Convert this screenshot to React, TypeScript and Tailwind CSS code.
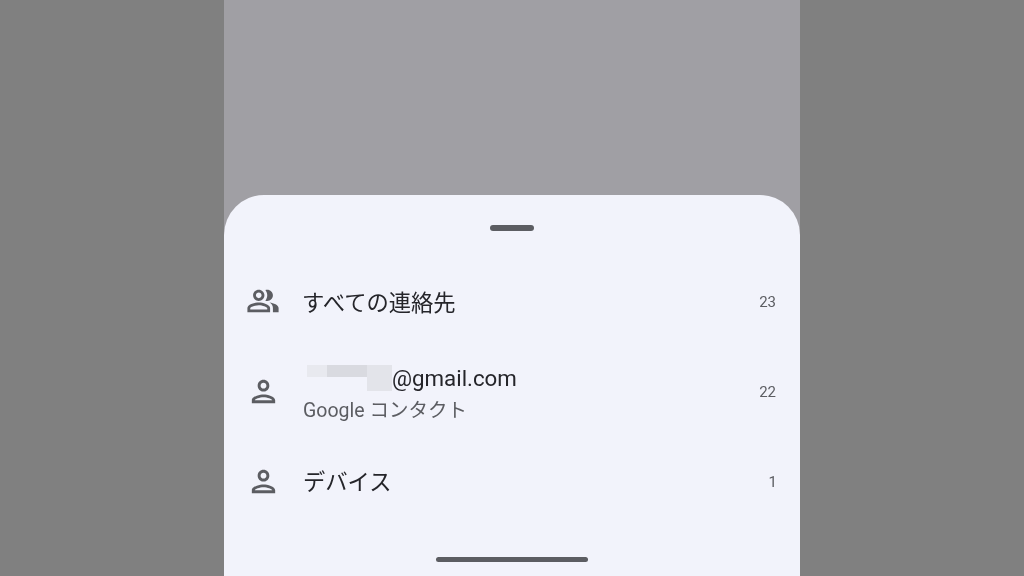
const font = "font-['Roboto','Noto_Sans_CJK_JP',sans-serif]";

const PersonIcon = () => (
    <svg viewBox="0 0 24 24" className="ml-[1px] -mr-[1px] -mt-[2px] w-[35px] h-[35px] fill-[#5c5d62]">
        <path d="M12 6c1.1 0 2 .9 2 2s-.9 2-2 2-2-.9-2-2 .9-2 2-2m0 10c2.7 0 5.8 1.29 6 2H6c.23-.72 3.31-2 6-2m0-12C9.79 4 8 5.79 8 8s1.79 4 4 4 4-1.79 4-4-1.79-4-4-4zm0 10c-2.67 0-8 1.34-8 4v2h16v-2c0-2.66-5.33-4-8-4z" />
    </svg>
);

const GroupIcon = () => (
    <svg viewBox="0 0 24 24" className="ml-[1px] -mr-[1px] -mt-[2px] w-[34px] h-[34px] fill-[#5c5d62]">
        <path d="M16.67 13.13C18.04 14.06 19 15.32 19 17v3h4v-3c0-2.18-3.57-3.47-6.33-3.87z" />
        <path d="M15 12c2.21 0 4-1.79 4-4s-1.79-4-4-4c-.47 0-.91.1-1.33.24C14.5 5.27 15 6.58 15 8s-.5 2.73-1.33 3.76c.42.14.86.24 1.33.24z" />
        <path d="M9 12c2.21 0 4-1.79 4-4s-1.79-4-4-4-4 1.79-4 4 1.79 4 4 4zm0-6c1.1 0 2 .9 2 2s-.9 2-2 2-2-.9-2-2 .9-2 2-2z" />
        <path d="M9 13c-2.67 0-8 1.34-8 4v3h16v-3c0-2.66-5.33-4-8-4zm6 5H3v-.99C3.2 16.29 6.3 15 9 15s5.8 1.29 6 2v1z" />
    </svg>
);

const Row = ({ icon, count, countClass, children }: { icon: React.ReactNode; count: string; countClass?: string; children: React.ReactNode }) => (
    <div className="flex h-[90px] items-center pl-[21px] pr-6">
        {icon}
        <div className="ml-[23px] flex-1">{children}</div>
        <span className={`text-[15px] text-[#5c5d62] ${countClass ?? ""}`}>{count}</span>
    </div>
);

export default function App() {
    return (
        <div className={`flex h-[576px] w-[1024px] justify-center overflow-hidden bg-[#808080] ${font}`}>
            <div className="flex w-[576px] flex-col bg-[#a09fa4] pt-[195px]">
                <div className="flex flex-1 flex-col rounded-t-[40px] bg-[#f2f3fb]">
                    <div className="mx-auto mt-[30px] h-[6px] w-[44px] rounded-full bg-[#5c5d62]" />
                    <div className="mt-[26px] blur-[0.35px]">
                        <Row icon={<GroupIcon />} count="23">
                            <p className="pt-[3px] text-[22.3px] text-[#25252a]">すべての連絡先</p>
                        </Row>
                        <Row icon={<PersonIcon />} count="22">
                            <div className="pt-[6px]">
                                <div className="flex h-[26px] items-start pl-1">
                                    <div className="flex h-[26px] w-[85px] items-start">
                                        <div className="h-[12px] w-[20px] bg-[#e8e9ef]" />
                                        <div className="h-[12px] w-[40px] bg-[#d9dae0]" />
                                        <div className="h-[26px] w-[25px] bg-[#e3e4ea]" />
                                    </div>
                                    <span className="text-[22.3px] leading-[26px] text-[#25252a]">@gmail.com</span>
                                </div>
                                <p className="mt-[6px] text-[19.5px] leading-[28px] text-[#5c5d62]">Google コンタクト</p>
                            </div>
                        </Row>
                        <Row icon={<PersonIcon />} count="1" countClass="-mr-[1px]">
                            <p className="pt-[2px] text-[22.3px] text-[#25252a]">デバイス</p>
                        </Row>
                    </div>
                    <div className="mx-auto mt-[30px] h-[5px] w-[152px] rounded-full bg-[#5c5d62]" />
                </div>
            </div>
        </div>
    );
}
